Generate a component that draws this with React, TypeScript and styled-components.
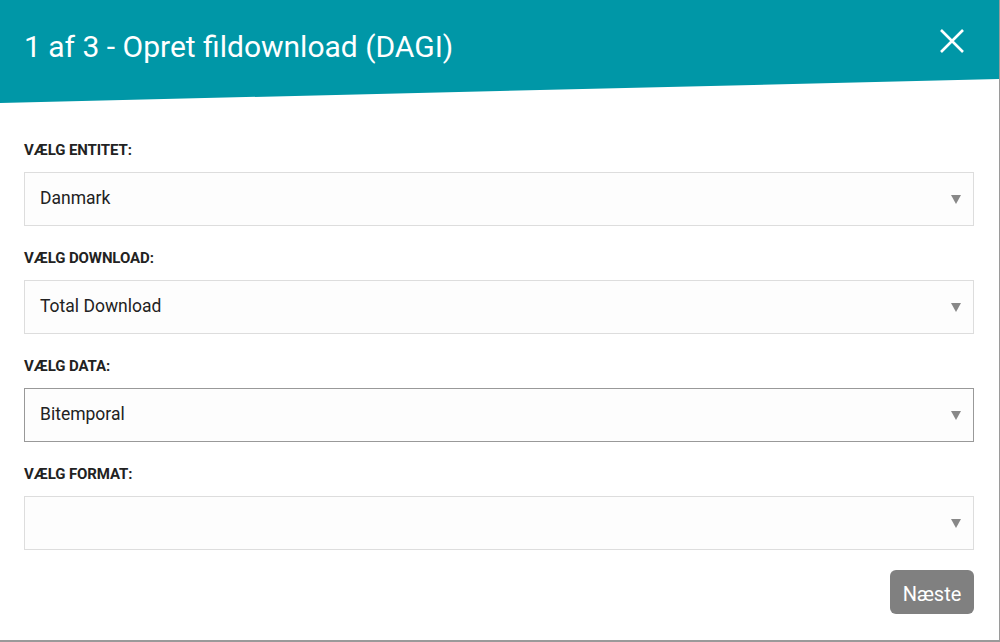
import React from "react";
import styled, { createGlobalStyle } from "styled-components";

const Global = createGlobalStyle`
  html, body { margin: 0; padding: 0; }
  body {
    background: #9a9a9a;
    font-family: Roboto, "Liberation Sans", Arial, sans-serif;
  }
`;

const Dialog = styled.div`
  width: 999px;
  height: 640px;
  background: #ffffff;
  display: flex;
  flex-direction: column;
  position: relative;
`;

const Header = styled.header`
  height: 104px;
  background: #0097a7;
  clip-path: polygon(0 0, 100% 0, 100% 79px, 0 103px);
  display: flex;
  align-items: flex-start;
  justify-content: space-between;
  padding: 0 24px 0 24px;
  box-sizing: border-box;
`;

const Title = styled.h1`
  margin: 28px 0 0 0;
  font-size: 30px;
  line-height: 38px;
  font-weight: 400;
  color: #ffffff;
`;

const CloseButton = styled.button`
  margin: 23px 5px 0 0;
  width: 36px;
  height: 36px;
  padding: 0;
  border: none;
  background: transparent;
  display: flex;
  align-items: center;
  justify-content: center;
  cursor: pointer;
`;

const Body = styled.div`
  flex: 1;
  padding: 38px 25px 0 24px;
  display: flex;
  flex-direction: column;
`;

const Form = styled.div`
  display: flex;
  flex-direction: column;
  gap: 24px;
`;

const Group = styled.div`
  display: flex;
  flex-direction: column;
  gap: 14px;
`;

const Label = styled.label`
  font-size: 15px;
  line-height: 16px;
  font-weight: 700;
  color: #222;
  letter-spacing: -0.1px;
`;

const Select = styled.div<{ $active?: boolean }>`
  height: 54px;
  box-sizing: border-box;
  border: 1px solid ${(p) => (p.$active ? "#999999" : "#dddddd")};
  background: #fdfdfd;
  display: flex;
  align-items: center;
  justify-content: space-between;
  padding: 0 12px 2px 15px;
  font-size: 17.5px;
  color: #222;
`;

const Arrow = styled.span`
  width: 0;
  height: 0;
  margin-top: 2px;
  border-left: 5px solid transparent;
  border-right: 5px solid transparent;
  border-top: 9px solid #888;
`;

const Footer = styled.div`
  display: flex;
  justify-content: flex-end;
  margin-top: 20px;
`;

const NextButton = styled.button`
  width: 84px;
  height: 44px;
  border: none;
  border-radius: 6px;
  background: #808080;
  color: #fff;
  font-family: Roboto, "Liberation Sans", Arial, sans-serif;
  font-size: 20px;
  padding: 3px 0 0 0;
`;

const fields = [
  { label: "VÆLG ENTITET:", value: "Danmark" },
  { label: "VÆLG DOWNLOAD:", value: "Total Download" },
  { label: "VÆLG DATA:", value: "Bitemporal", active: true },
  { label: "VÆLG FORMAT:", value: "" },
];

export default function App() {
  return (
    <>
      <Global />
      <Dialog>
        <Header>
          <Title>1 af 3 - Opret fildownload (DAGI)</Title>
          <CloseButton aria-label="Luk">
            <svg width="26" height="26" viewBox="0 0 26 26">
              <path d="M2 2 L24 24 M24 2 L2 24" stroke="#fff" strokeWidth="2.6" />
            </svg>
          </CloseButton>
        </Header>
        <Body>
          <Form>
            {fields.map((f) => (
              <Group key={f.label}>
                <Label>{f.label}</Label>
                <Select $active={f.active}>
                  <span>{f.value}</span>
                  <Arrow />
                </Select>
              </Group>
            ))}
          </Form>
          <Footer>
            <NextButton>Næste</NextButton>
          </Footer>
        </Body>
      </Dialog>
    </>
  );
}
